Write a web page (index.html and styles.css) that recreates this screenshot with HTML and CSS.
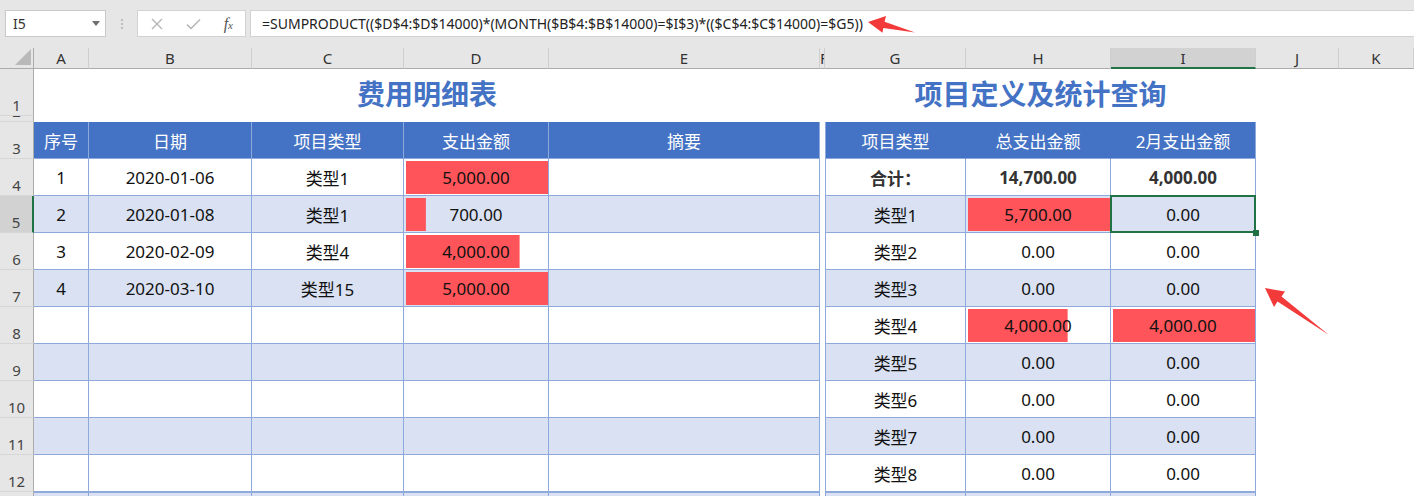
FILE: index.html
```html
<!DOCTYPE html>
<html lang="zh-CN">
<head>
<meta charset="utf-8">
<title>费用明细表</title>
<link rel="stylesheet" href="styles.css">
</head>
<body>
<div class="app">
  <div class="toolbar">
    <div class="namebox"><span>I5</span><svg class="dd" width="8" height="5" viewBox="0 0 8 5"><path d="M0 0H8L4 5Z" fill="#6d6d6d"/></svg></div>
    <div class="dots"><svg width="4" height="12" viewBox="0 0 4 12"><circle cx="2" cy="2" r="1.1" fill="#b5b5b5"/><circle cx="2" cy="6" r="1.1" fill="#b5b5b5"/><circle cx="2" cy="10" r="1.1" fill="#b5b5b5"/></svg></div>
    <div class="fxbox">
      <svg width="12" height="12" viewBox="0 0 12 12"><path d="M1 1L11 11M11 1L1 11" stroke="#b3b3b3" stroke-width="1.3" fill="none"/></svg>
      <svg width="15" height="12" viewBox="0 0 15 12"><path d="M1 6.5L5 10.5L14 1.5" stroke="#b3b3b3" stroke-width="1.4" fill="none"/></svg>
      <span class="fx">f<small>x</small></span>
    </div>
    <div class="formula">=SUMPRODUCT(($D$4:$D$14000)*(MONTH($B$4:$B$14000)=$I$3)*(($C$4:$C$14000)=$G5))</div>
  </div>

  <div class="sheet">
    <!-- column headers -->
    <div class="corner"><svg width="16" height="16" viewBox="0 0 16 16"><path d="M16 0V16H0Z" fill="#b9b9b9"/></svg></div>
    <div class="ch">A</div><div class="ch">B</div><div class="ch">C</div><div class="ch">D</div><div class="ch">E</div><div class="ch chf">F</div><div class="ch">G</div><div class="ch">H</div><div class="ch chsel">I</div><div class="ch">J</div><div class="ch">K</div>

    <!-- row 1 -->
    <div class="rh">1</div>
    <div class="cell title t1">费用明细表</div>
    <div class="cell"></div>
    <div class="cell title t2">项目定义及统计查询</div>
    <div class="cell"></div><div class="cell"></div>

    <!-- row 2 -->
    <div class="rh">2</div>
    <div class="cell span-all"></div>

    <!-- row 3 -->
    <div class="rh">3</div>
    <div class="cell t th">序号</div>
    <div class="cell t th">日期</div>
    <div class="cell t th">项目类型</div>
    <div class="cell t th">支出金额</div>
    <div class="cell t th">摘要</div>
    <div class="cell"></div>
    <div class="cell t th gl ns">项目类型</div>
    <div class="cell t th ns">总支出金额</div>
    <div class="cell t th">2月支出金额</div>
    <div class="cell"></div><div class="cell"></div>

    <!-- row 4 -->
    <div class="rh">4</div>
    <div class="cell t">1</div>
    <div class="cell t">2020-01-06</div>
    <div class="cell t">类型1</div>
    <div class="cell t bar" style="--p:1">5,000.00</div>
    <div class="cell t"></div>
    <div class="cell"></div>
    <div class="cell t gl b">合计：</div>
    <div class="cell t b">14,700.00</div>
    <div class="cell t b">4,000.00</div>
    <div class="cell"></div><div class="cell"></div>

    <!-- row 5 -->
    <div class="rh rhsel">5</div>
    <div class="cell t alt">2</div>
    <div class="cell t alt">2020-01-08</div>
    <div class="cell t alt">类型1</div>
    <div class="cell t alt bar" style="--p:0.14">700.00</div>
    <div class="cell t alt"></div>
    <div class="cell"></div>
    <div class="cell t gl alt">类型1</div>
    <div class="cell t alt bar" style="--p:1">5,700.00</div>
    <div class="cell t alt sel">0.00</div>
    <div class="cell"></div><div class="cell"></div>

    <!-- row 6 -->
    <div class="rh">6</div>
    <div class="cell t">3</div>
    <div class="cell t">2020-02-09</div>
    <div class="cell t">类型4</div>
    <div class="cell t bar" style="--p:0.8">4,000.00</div>
    <div class="cell t"></div>
    <div class="cell"></div>
    <div class="cell t gl">类型2</div>
    <div class="cell t">0.00</div>
    <div class="cell t">0.00</div>
    <div class="cell"></div><div class="cell"></div>

    <!-- row 7 -->
    <div class="rh">7</div>
    <div class="cell t alt">4</div>
    <div class="cell t alt">2020-03-10</div>
    <div class="cell t alt">类型15</div>
    <div class="cell t alt bar" style="--p:1">5,000.00</div>
    <div class="cell t alt"></div>
    <div class="cell"></div>
    <div class="cell t gl alt">类型3</div>
    <div class="cell t alt">0.00</div>
    <div class="cell t alt">0.00</div>
    <div class="cell"></div><div class="cell"></div>

    <!-- row 8 -->
    <div class="rh">8</div>
    <div class="cell t"></div><div class="cell t"></div><div class="cell t"></div><div class="cell t"></div><div class="cell t"></div>
    <div class="cell"></div>
    <div class="cell t gl">类型4</div>
    <div class="cell t bar" style="--p:0.7018">4,000.00</div>
    <div class="cell t bar" style="--p:1">4,000.00</div>
    <div class="cell"></div><div class="cell"></div>

    <!-- row 9 -->
    <div class="rh">9</div>
    <div class="cell t alt"></div><div class="cell t alt"></div><div class="cell t alt"></div><div class="cell t alt"></div><div class="cell t alt"></div>
    <div class="cell"></div>
    <div class="cell t gl alt">类型5</div>
    <div class="cell t alt">0.00</div>
    <div class="cell t alt">0.00</div>
    <div class="cell"></div><div class="cell"></div>

    <!-- row 10 -->
    <div class="rh">10</div>
    <div class="cell t"></div><div class="cell t"></div><div class="cell t"></div><div class="cell t"></div><div class="cell t"></div>
    <div class="cell"></div>
    <div class="cell t gl">类型6</div>
    <div class="cell t">0.00</div>
    <div class="cell t">0.00</div>
    <div class="cell"></div><div class="cell"></div>

    <!-- row 11 -->
    <div class="rh">11</div>
    <div class="cell t alt"></div><div class="cell t alt"></div><div class="cell t alt"></div><div class="cell t alt"></div><div class="cell t alt"></div>
    <div class="cell"></div>
    <div class="cell t gl alt">类型7</div>
    <div class="cell t alt">0.00</div>
    <div class="cell t alt">0.00</div>
    <div class="cell"></div><div class="cell"></div>

    <!-- row 12 -->
    <div class="rh">12</div>
    <div class="cell t"></div><div class="cell t"></div><div class="cell t"></div><div class="cell t"></div><div class="cell t"></div>
    <div class="cell"></div>
    <div class="cell t gl">类型8</div>
    <div class="cell t">0.00</div>
    <div class="cell t">0.00</div>
    <div class="cell"></div><div class="cell"></div>

    <!-- row 13 -->
    <div class="rh">13</div>
    <div class="cell t alt tt"></div><div class="cell t alt tt"></div><div class="cell t alt tt"></div><div class="cell t alt tt"></div><div class="cell t alt tt"></div>
    <div class="cell"></div>
    <div class="cell t gl alt tt">类型9</div>
    <div class="cell t alt tt">0.00</div>
    <div class="cell t alt tt">0.00</div>
    <div class="cell"></div><div class="cell"></div>
  </div>

  <svg class="overlay" width="1414" height="496" viewBox="0 0 1414 496">
    <polygon points="868,22 886,16 884.6,21.8 915,32.5 883.3,28 882.5,32.8" fill="#f23a3a"/>
    <polygon points="1265,288 1285,291.5 1281.5,296.5 1329,335 1277.5,301.5 1274,307" fill="#f23a3a"/>
  </svg>
</div>
</body>
</html>
```

FILE: styles.css
```css
* { box-sizing: border-box; }

body {
  margin: 0;
  background: #ffffff;
  font-family: "Noto Sans", "Noto Sans CJK SC", sans-serif;
}

.app {
  position: relative;
  width: 1414px;
  height: 496px;
  overflow: hidden;
  background: #ffffff;
}

/* ---------- formula bar ---------- */
.toolbar {
  height: 48px;
  background: #e6e6e6;
  display: flex;
  align-items: flex-start;
  padding-top: 10px;
}

.namebox {
  margin-left: 5px;
  width: 101px;
  height: 27px;
  border: 1px solid #c9c9c9;
  background: #fff;
  display: flex;
  align-items: center;
  justify-content: space-between;
  padding: 0 5px 0 7px;
  font-size: 14px;
  color: #333;
}

.dots {
  width: 31px;
  height: 27px;
  display: flex;
  align-items: center;
  justify-content: center;
}

.fxbox {
  width: 109px;
  height: 27px;
  border: 1px solid #d2d2d2;
  background: #fff;
  display: flex;
  align-items: center;
  justify-content: space-between;
  padding: 0 12px 0 13px;
}

.fx {
  font-family: "Liberation Serif", serif;
  font-style: italic;
  font-size: 16px;
  color: #555;
  line-height: 1;
}

.fx small {
  font-size: 11px;
}

.formula {
  margin-left: 4px;
  flex: 1;
  height: 27px;
  border: 1px solid #d2d2d2;
  border-right: none;
  background: #fff;
  display: flex;
  align-items: center;
  padding-left: 11px;
  font-size: 14px;
  color: #222;
  white-space: nowrap;
}

/* ---------- sheet grid ---------- */
.sheet {
  display: grid;
  grid-template-columns: 34px 55px 163px 152px 145px 271px 5px 141px 145px 145px 83px 75px;
  grid-template-rows: 21px 47px 6px repeat(11, 37px);
}

.corner {
  background: #e6e6e6;
  border-right: 1px solid #ababab;
  border-bottom: 1px solid #ababab;
  display: flex;
  align-items: flex-end;
  justify-content: flex-end;
  padding: 0 2px 3px 0;
}

.ch {
  background: #e6e6e6;
  border-right: 1px solid #cfcfcf;
  border-bottom: 1px solid #ababab;
  display: flex;
  align-items: center;
  justify-content: center;
  font-size: 15px;
  color: #333;
  overflow: hidden;
}

.chf { justify-content: flex-start; }

.chsel {
  background: #d2d2d2;
  border-bottom: 2px solid #217346;
}

.rh {
  background: #e6e6e6;
  border-right: 1px solid #ababab;
  border-bottom: 1px solid #d6d6d6;
  display: flex;
  align-items: flex-end;
  justify-content: center;
  font-size: 15px;
  line-height: 1;
  color: #444;
  overflow: hidden;
  padding-bottom: 2px;
}

.rhsel {
  background: #d2d2d2;
  border-right: 2px solid #217346;
}

.cell {
  display: flex;
  align-items: center;
  justify-content: center;
  font-size: 17px;
  color: #111;
  white-space: nowrap;
  background: #fff;
}

.span-all { grid-column: 2 / 13; }

.title {
  font-family: "Noto Sans CJK SC", sans-serif;
  font-size: 28px;
  font-weight: bold;
  color: #4472c4;
}

.t1 { grid-column: 2 / 7; }
.t2 { grid-column: 8 / 11; }

.t {
  border-right: 1px solid #8ea9db;
  border-bottom: 1px solid #8ea9db;
}

.gl { border-left: 1px solid #8ea9db; }

.th {
  background: #4472c4;
  color: #fff;
}

.th.ns { border-right-color: #4472c4; }

.alt { background-color: #d9e1f2; }

.b {
  font-weight: bold;
  color: #333;
}

.bar {
  background-image: linear-gradient(#ff555a, #ff555a);
  background-repeat: no-repeat;
  background-position: 2px 2px;
  background-size: calc((100% - 2px) * var(--p)) calc(100% - 3px);
}

.tt { border-top: 1px solid #8ea9db; }

/* selected cell */
.sel { position: relative; }

.sel::after {
  content: "";
  position: absolute;
  left: -1px;
  top: -1px;
  right: -1px;
  bottom: -1px;
  border: 2px solid #217346;
}

.sel::before {
  content: "";
  position: absolute;
  right: -4px;
  bottom: -4px;
  width: 6px;
  height: 6px;
  background: #217346;
  z-index: 2;
}

/* annotation arrows */
.overlay {
  position: absolute;
  left: 0;
  top: 0;
  pointer-events: none;
}
```
